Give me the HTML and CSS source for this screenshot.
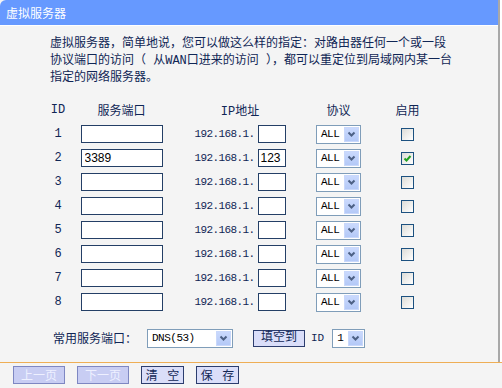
FILE: index.html
```html
<!DOCTYPE html>
<html lang="zh-CN">

<head>
  <meta charset="UTF-8">
  <title>虚拟服务器</title>
  <link rel="stylesheet" href="styles.css">
</head>

<body>
  <div class="frame">
    <div class="title-bar">虚拟服务器</div>
    <p class="intro">虚拟服务器，简单地说，您可以做这么样的指定：对路由器任何一个或一段<br>协议端口的访问（ 从WAN口进来的访问 ），都可以重定位到局域网内某一台<br>指定的网络服务器。</p>

    <div class="grid">
      <div class="head">ID</div>
      <div class="head">服务端口</div>
      <div class="head">IP地址</div>
      <div class="head">协议</div>
      <div class="head">启用</div>

      <div>1</div>
      <input class="port" type="text">
      <div class="ip"><span class="ip-prefix">192.168.1.</span><input class="ip-input" type="text"></div>
      <div class="select sel-all"><span class="select-text">ALL</span><span class="select-btn"><svg width="9" height="6" viewBox="0 0 9 6"><polyline points="1.5,1.5 4.5,4.5 7.5,1.5" /></svg></span></div>
      <div class="check"></div>

      <div>2</div>
      <input class="port" type="text" value="3389">
      <div class="ip"><span class="ip-prefix">192.168.1.</span><input class="ip-input" type="text" value="123"></div>
      <div class="select sel-all"><span class="select-text">ALL</span><span class="select-btn"><svg width="9" height="6" viewBox="0 0 9 6"><polyline points="1.5,1.5 4.5,4.5 7.5,1.5" /></svg></span></div>
      <div class="check"><svg width="11" height="11" viewBox="0 0 11 11"><polyline points="2.5,5.5 4.5,7.5 8.5,3" /></svg></div>

      <div>3</div>
      <input class="port" type="text">
      <div class="ip"><span class="ip-prefix">192.168.1.</span><input class="ip-input" type="text"></div>
      <div class="select sel-all"><span class="select-text">ALL</span><span class="select-btn"><svg width="9" height="6" viewBox="0 0 9 6"><polyline points="1.5,1.5 4.5,4.5 7.5,1.5" /></svg></span></div>
      <div class="check"></div>

      <div>4</div>
      <input class="port" type="text">
      <div class="ip"><span class="ip-prefix">192.168.1.</span><input class="ip-input" type="text"></div>
      <div class="select sel-all"><span class="select-text">ALL</span><span class="select-btn"><svg width="9" height="6" viewBox="0 0 9 6"><polyline points="1.5,1.5 4.5,4.5 7.5,1.5" /></svg></span></div>
      <div class="check"></div>

      <div>5</div>
      <input class="port" type="text">
      <div class="ip"><span class="ip-prefix">192.168.1.</span><input class="ip-input" type="text"></div>
      <div class="select sel-all"><span class="select-text">ALL</span><span class="select-btn"><svg width="9" height="6" viewBox="0 0 9 6"><polyline points="1.5,1.5 4.5,4.5 7.5,1.5" /></svg></span></div>
      <div class="check"></div>

      <div>6</div>
      <input class="port" type="text">
      <div class="ip"><span class="ip-prefix">192.168.1.</span><input class="ip-input" type="text"></div>
      <div class="select sel-all"><span class="select-text">ALL</span><span class="select-btn"><svg width="9" height="6" viewBox="0 0 9 6"><polyline points="1.5,1.5 4.5,4.5 7.5,1.5" /></svg></span></div>
      <div class="check"></div>

      <div>7</div>
      <input class="port" type="text">
      <div class="ip"><span class="ip-prefix">192.168.1.</span><input class="ip-input" type="text"></div>
      <div class="select sel-all"><span class="select-text">ALL</span><span class="select-btn"><svg width="9" height="6" viewBox="0 0 9 6"><polyline points="1.5,1.5 4.5,4.5 7.5,1.5" /></svg></span></div>
      <div class="check"></div>

      <div>8</div>
      <input class="port" type="text">
      <div class="ip"><span class="ip-prefix">192.168.1.</span><input class="ip-input" type="text"></div>
      <div class="select sel-all"><span class="select-text">ALL</span><span class="select-btn"><svg width="9" height="6" viewBox="0 0 9 6"><polyline points="1.5,1.5 4.5,4.5 7.5,1.5" /></svg></span></div>
      <div class="check"></div>
    </div>

    <div class="quick">
      <span class="quick-label">常用服务端口：</span>
      <div class="select sel-dns"><span class="select-text">DNS(53)</span><span class="select-btn"><svg width="9" height="6" viewBox="0 0 9 6"><polyline points="1.5,1.5 4.5,4.5 7.5,1.5" /></svg></span></div>
      <div class="fill-btn">填空到</div>
      <span class="quick-id">ID</span>
      <div class="select sel-id"><span class="select-text">1</span><span class="select-btn"><svg width="9" height="6" viewBox="0 0 9 6"><polyline points="1.5,1.5 4.5,4.5 7.5,1.5" /></svg></span></div>
    </div>
  </div>

  <div class="footer">
    <div class="btn disabled">上一页</div>
    <div class="btn disabled">下一页</div>
    <div class="btn short">清 空</div>
    <div class="btn short">保 存</div>
  </div>
</body>

</html>
```

FILE: styles.css
```css
* {
  margin: 0;
  padding: 0;
  box-sizing: border-box;
}

body {
  background: #fff;
  font-family: "Liberation Mono", "Noto Sans CJK SC", monospace;
  font-size: 12px;
  color: #102655;
}

.frame {
  width: 500px;
  height: 362px;
  background: #f4f4f4;
  border-right: 2px solid #a8a8a8;
}

.title-bar {
  height: 26px;
  background: #6699ff;
  border-bottom: 1px solid #fff;
  border-radius: 6px 0 0 0;
  color: #fff;
  font-family: "Noto Sans CJK SC", sans-serif;
  font-size: 12px;
  line-height: 25px;
  padding-left: 6px;
}

.intro {
  margin: 10px 0 0 50px;
  line-height: 17px;
}

.grid {
  display: grid;
  grid-template-columns: 24px 103px 134px 63px 75px;
  grid-auto-rows: 24px;
  align-items: center;
  justify-items: center;
  margin: 11px 0 0 46px;
}

.port,
.ip-input {
  height: 18px;
  border: 1px solid #243f66;
  background: #fff;
  font-family: "Liberation Sans", sans-serif;
  font-size: 12px;
  color: #000;
  padding-left: 3px;
  outline: none;
}

.port {
  width: 82px;
}

.ip-input {
  width: 28px;
  padding-left: 2px;
}

.ip {
  display: flex;
  align-items: center;
}

.ip-prefix {
  font-size: 11px;
  letter-spacing: -0.6px;
  margin-right: 3px;
}

.select {
  display: flex;
  align-items: center;
  justify-content: space-between;
  height: 19px;
  padding: 1px;
  border: 1px solid #7f9db9;
  background: #fff;
  color: #000;
}

.select-text {
  font-size: 11px;
  letter-spacing: -0.5px;
  padding-left: 3px;
}

.select-btn {
  display: flex;
  align-items: center;
  justify-content: center;
  width: 15px;
  height: 15px;
  background: linear-gradient(#cad9fd, #b4c9f7);
  border: 1px solid #c9d8fb;
}

.select-btn polyline {
  fill: none;
  stroke: #4d6185;
  stroke-width: 2;
}

.sel-all {
  width: 45px;
}

.sel-dns {
  width: 86px;
  margin-left: 10px;
}

.sel-id {
  width: 33px;
  margin-left: 8px;
}

.check {
  width: 13px;
  height: 13px;
  border: 1px solid #1c5180;
  background: linear-gradient(135deg, #dcdcd7, #fff);
}

.check polyline {
  fill: none;
  stroke: #21a121;
  stroke-width: 2;
}

.quick {
  display: flex;
  align-items: center;
  height: 20px;
  margin-top: 14px;
  padding-left: 53px;
}

.fill-btn {
  width: 52px;
  height: 17px;
  margin-left: 20px;
  border: 1px solid #2c3d6e;
  background: #dadef9;
  line-height: 15px;
  text-align: center;
}

.quick-id {
  margin-left: 6px;
  font-size: 11px;
}

.footer {
  display: flex;
  gap: 12px;
  height: 26px;
  padding: 3px 0 0 13px;
  background: #f4f4f4;
  border-top: 1px solid #eeae56;
}

.btn {
  width: 52px;
  height: 18px;
  border: 1px solid #2c3d6e;
  background: #dadef9;
  line-height: 16px;
  text-align: center;
  font-family: "Noto Sans CJK SC", sans-serif;
}

.btn.short {
  width: 43px;
  word-spacing: 7px;
}

.btn.disabled {
  border-color: #7e87c2;
  background: #c8cdf3;
  color: #eef0ff;
}
```
